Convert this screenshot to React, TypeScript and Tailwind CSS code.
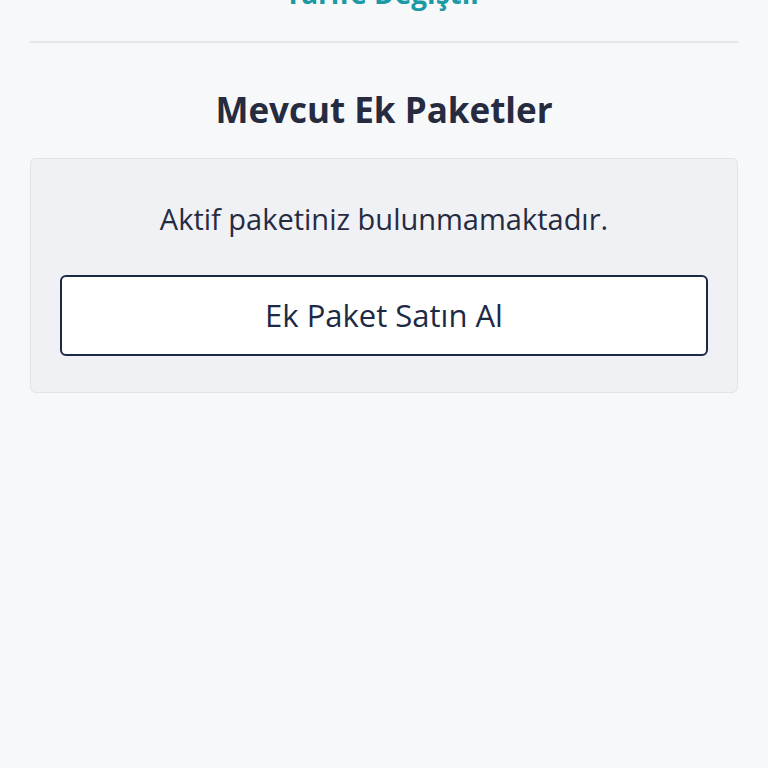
export default function App() {
  return (
    <div
      className="min-h-[768px] w-full bg-[#f7f8fa] px-[30px] overflow-hidden"
      style={{ fontFamily: '"Open Sans", "Liberation Sans", sans-serif' }}
    >
      <div className="-mt-[27px] border-b-2 border-[#e3e6eb] pb-[28px] text-center text-[28px] font-bold leading-[40px] text-[#1b9aa6]">
        Tarife Değiştir
      </div>
      <h2 className="mt-[47px] text-center text-[35px] font-bold leading-[40px] text-[#262b40]">
        Mevcut Ek Paketler
      </h2>
      <div className="mt-[28px] rounded-[6px] border border-[#e0e3e8] bg-[#eff1f5] px-[29px] pt-[38px] pb-[36px]">
        <p className="text-center text-[29px] leading-[44px] text-[#262b40]">
          Aktif paketiniz bulunmamaktadır.
        </p>
        <button className="mt-[34px] flex h-[81px] w-full items-center justify-center rounded-[6px] border-2 border-[#1a2a44] bg-white text-[31px] font-medium text-[#1c2a44]">
          Ek Paket Satın Al
        </button>
      </div>
    </div>
  );
}
